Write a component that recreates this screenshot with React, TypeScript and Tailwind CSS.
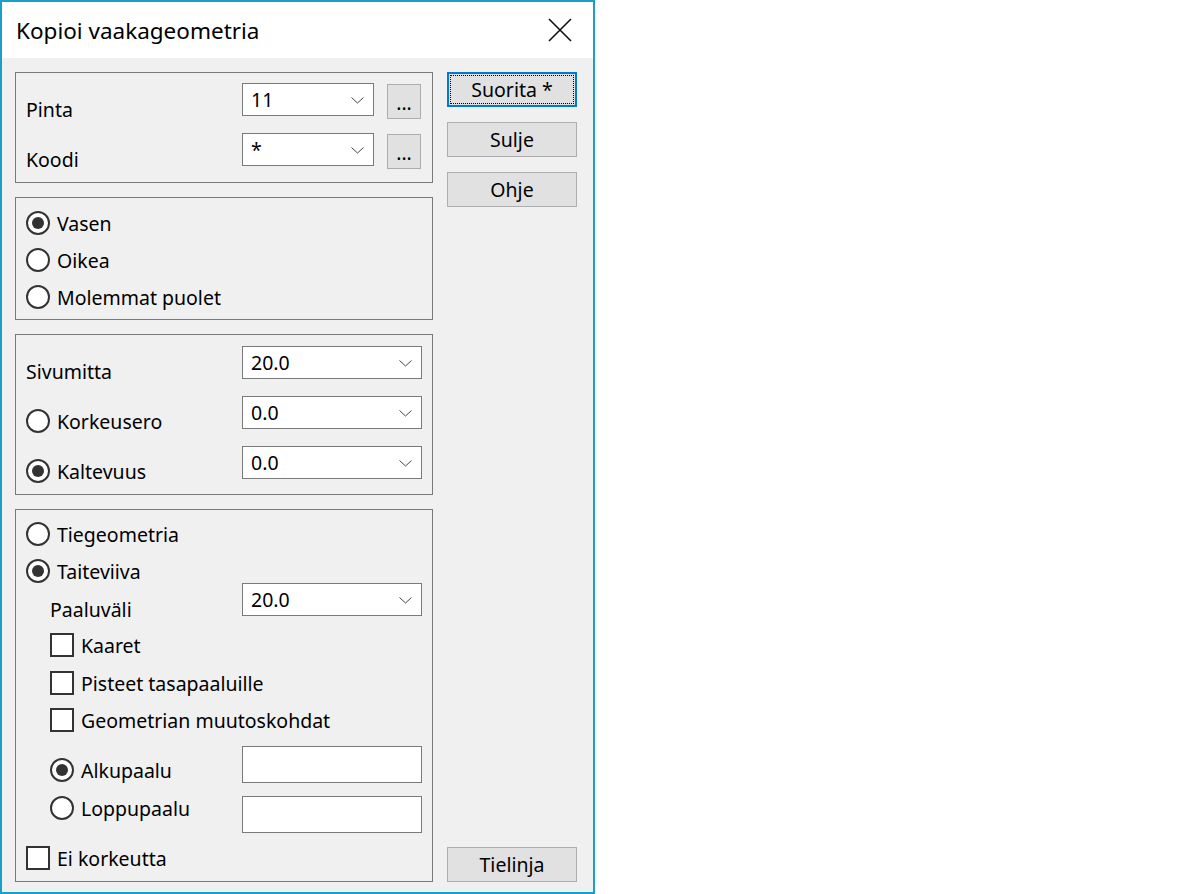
import React from "react";

function Chevron() {
  return (
    <svg width="13" height="7" viewBox="0 0 13 7" className="mt-[2px] shrink-0">
      <polyline points="0.5,0.5 6.5,6 12.5,0.5" fill="none" stroke="#444" strokeWidth="1" />
    </svg>
  );
}

function Combo({ value, wide }: { value: string; wide?: boolean }) {
  return (
    <div
      className={`h-[33px] ${wide ? "w-[180px]" : "w-[132px]"} bg-white border border-[#7a7a7a] flex items-center justify-between pl-[8px] pr-[9px]`}
    >
      <span className="leading-[26px]">{value}</span>
      <Chevron />
    </div>
  );
}

function Radio({ label, checked, className = "" }: { label: string; checked?: boolean; className?: string }) {
  return (
    <div className={`flex items-start gap-[7px] ${className}`}>
      <span className="w-[24px] h-[24px] rounded-full border-2 border-[#333] bg-white flex items-center justify-center shrink-0">
        {checked && <span className="w-[12px] h-[12px] rounded-full bg-[#333]" />}
      </span>
      <span className="leading-[24px] mt-[1px]">{label}</span>
    </div>
  );
}

function Check({ label, className = "" }: { label: string; className?: string }) {
  return (
    <div className={`flex items-start gap-[7px] ${className}`}>
      <span className="w-[24px] h-[24px] border-2 border-[#333] bg-white shrink-0" />
      <span className="leading-[24px] mt-[1px]">{label}</span>
    </div>
  );
}

function DotsButton() {
  return (
    <div className="ml-[13px] mt-[1px] w-[34px] h-[35px] bg-[#e1e1e1] border border-[#adadad] flex items-center justify-center">
      <span className="leading-[26px] mt-[2px]">...</span>
    </div>
  );
}

function Button({ label, focused, className = "" }: { label: string; focused?: boolean; className?: string }) {
  return (
    <div
      className={`relative h-[35px] w-[130px] bg-[#e1e1e1] flex items-center justify-center ${
        focused ? "border-2 border-[#0078d7]" : "border border-[#adadad]"
      } ${className}`}
    >
      {focused && <span className="absolute inset-[1px] border border-dotted border-black" />}
      <span className="leading-[24px] mt-[1px]">{label}</span>
    </div>
  );
}

export default function App() {
  return (
    <div className="w-[1200px] h-[894px] bg-white font-['Noto_Sans',sans-serif] text-[19.5px] text-black">
      <div className="w-[595px] h-[894px] border-2 border-[#18a1c6] flex flex-col">
        <div className="h-[56px] bg-white flex items-center justify-between pl-[14px] pr-[21px]">
          <span className="text-[22.5px] leading-[30px] mt-[2px]">Kopioi vaakageometria</span>
          <svg width="24" height="24" viewBox="0 0 24 24">
            <path d="M1 1 L23 23 M23 1 L1 23" stroke="#111" strokeWidth="1.6" fill="none" />
          </svg>
        </div>

        <div className="flex-1 bg-[#f0f0f0] flex gap-[14px] pl-[13px] pt-[14px] pb-[10px]">
          <div className="w-[418px] flex flex-col gap-[14px]">
            <div className="h-[111px] border border-[#7a7a7a] pt-[10px] pl-[10px]">
              <div className="h-[50px] flex items-start">
                <span className="w-[216px] pt-[14px] leading-[26px]">Pinta</span>
                <Combo value="11" />
                <DotsButton />
              </div>
              <div className="h-[50px] flex items-start">
                <span className="w-[216px] pt-[14px] leading-[26px]">Koodi</span>
                <Combo value="*" />
                <DotsButton />
              </div>
            </div>

            <div className="h-[123px] border border-[#7a7a7a] pt-[13px] pl-[10px]">
              <div className="h-[37px]">
                <Radio label="Vasen" checked />
              </div>
              <div className="h-[37px]">
                <Radio label="Oikea" />
              </div>
              <Radio label="Molemmat puolet" />
            </div>

            <div className="h-[161px] border border-[#7a7a7a] pt-[11px] pl-[10px]">
              <div className="h-[50px] flex items-start">
                <span className="w-[216px] pt-[13px] leading-[26px]">Sivumitta</span>
                <Combo value="20.0" wide />
              </div>
              <div className="h-[50px] flex items-start">
                <div className="w-[216px] pt-[13px]">
                  <Radio label="Korkeusero" />
                </div>
                <Combo value="0.0" wide />
              </div>
              <div className="h-[50px] flex items-start">
                <div className="w-[216px] pt-[13px]">
                  <Radio label="Kaltevuus" checked />
                </div>
                <Combo value="0.0" wide />
              </div>
            </div>

            <div className="h-[373px] border border-[#7a7a7a] pt-[12px] pl-[10px]">
              <div className="h-[37px]">
                <Radio label="Tiegeometria" />
              </div>
              <div className="h-[24px]">
                <Radio label="Taiteviiva" checked />
              </div>
              <div className="h-[50px] flex items-start">
                <span className="w-[216px] pl-[24px] pt-[14px] leading-[26px]">Paaluväli</span>
                <Combo value="20.0" wide />
              </div>
              <div className="h-[38px]">
                <Check label="Kaaret" className="ml-[24px]" />
              </div>
              <div className="h-[37px]">
                <Check label="Pisteet tasapaaluille" className="ml-[24px]" />
              </div>
              <div className="h-[38px]">
                <Check label="Geometrian muutoskohdat" className="ml-[24px]" />
              </div>
              <div className="h-[50px] flex items-start">
                <div className="w-[216px] pl-[24px] pt-[12px]">
                  <Radio label="Alkupaalu" checked />
                </div>
                <div className="w-[180px] h-[37px] bg-white border border-[#7a7a7a]" />
              </div>
              <div className="h-[50px] flex items-start">
                <div className="w-[216px] pl-[24px]">
                  <Radio label="Loppupaalu" />
                </div>
                <div className="w-[180px] h-[37px] bg-white border border-[#7a7a7a]" />
              </div>
              <Check label="Ei korkeutta" />
            </div>
          </div>

          <div className="w-[130px] flex flex-col gap-[15px]">
            <Button label="Suorita *" focused />
            <Button label="Sulje" />
            <Button label="Ohje" />
            <Button label="Tielinja" className="mt-auto" />
          </div>
        </div>
      </div>
    </div>
  );
}
